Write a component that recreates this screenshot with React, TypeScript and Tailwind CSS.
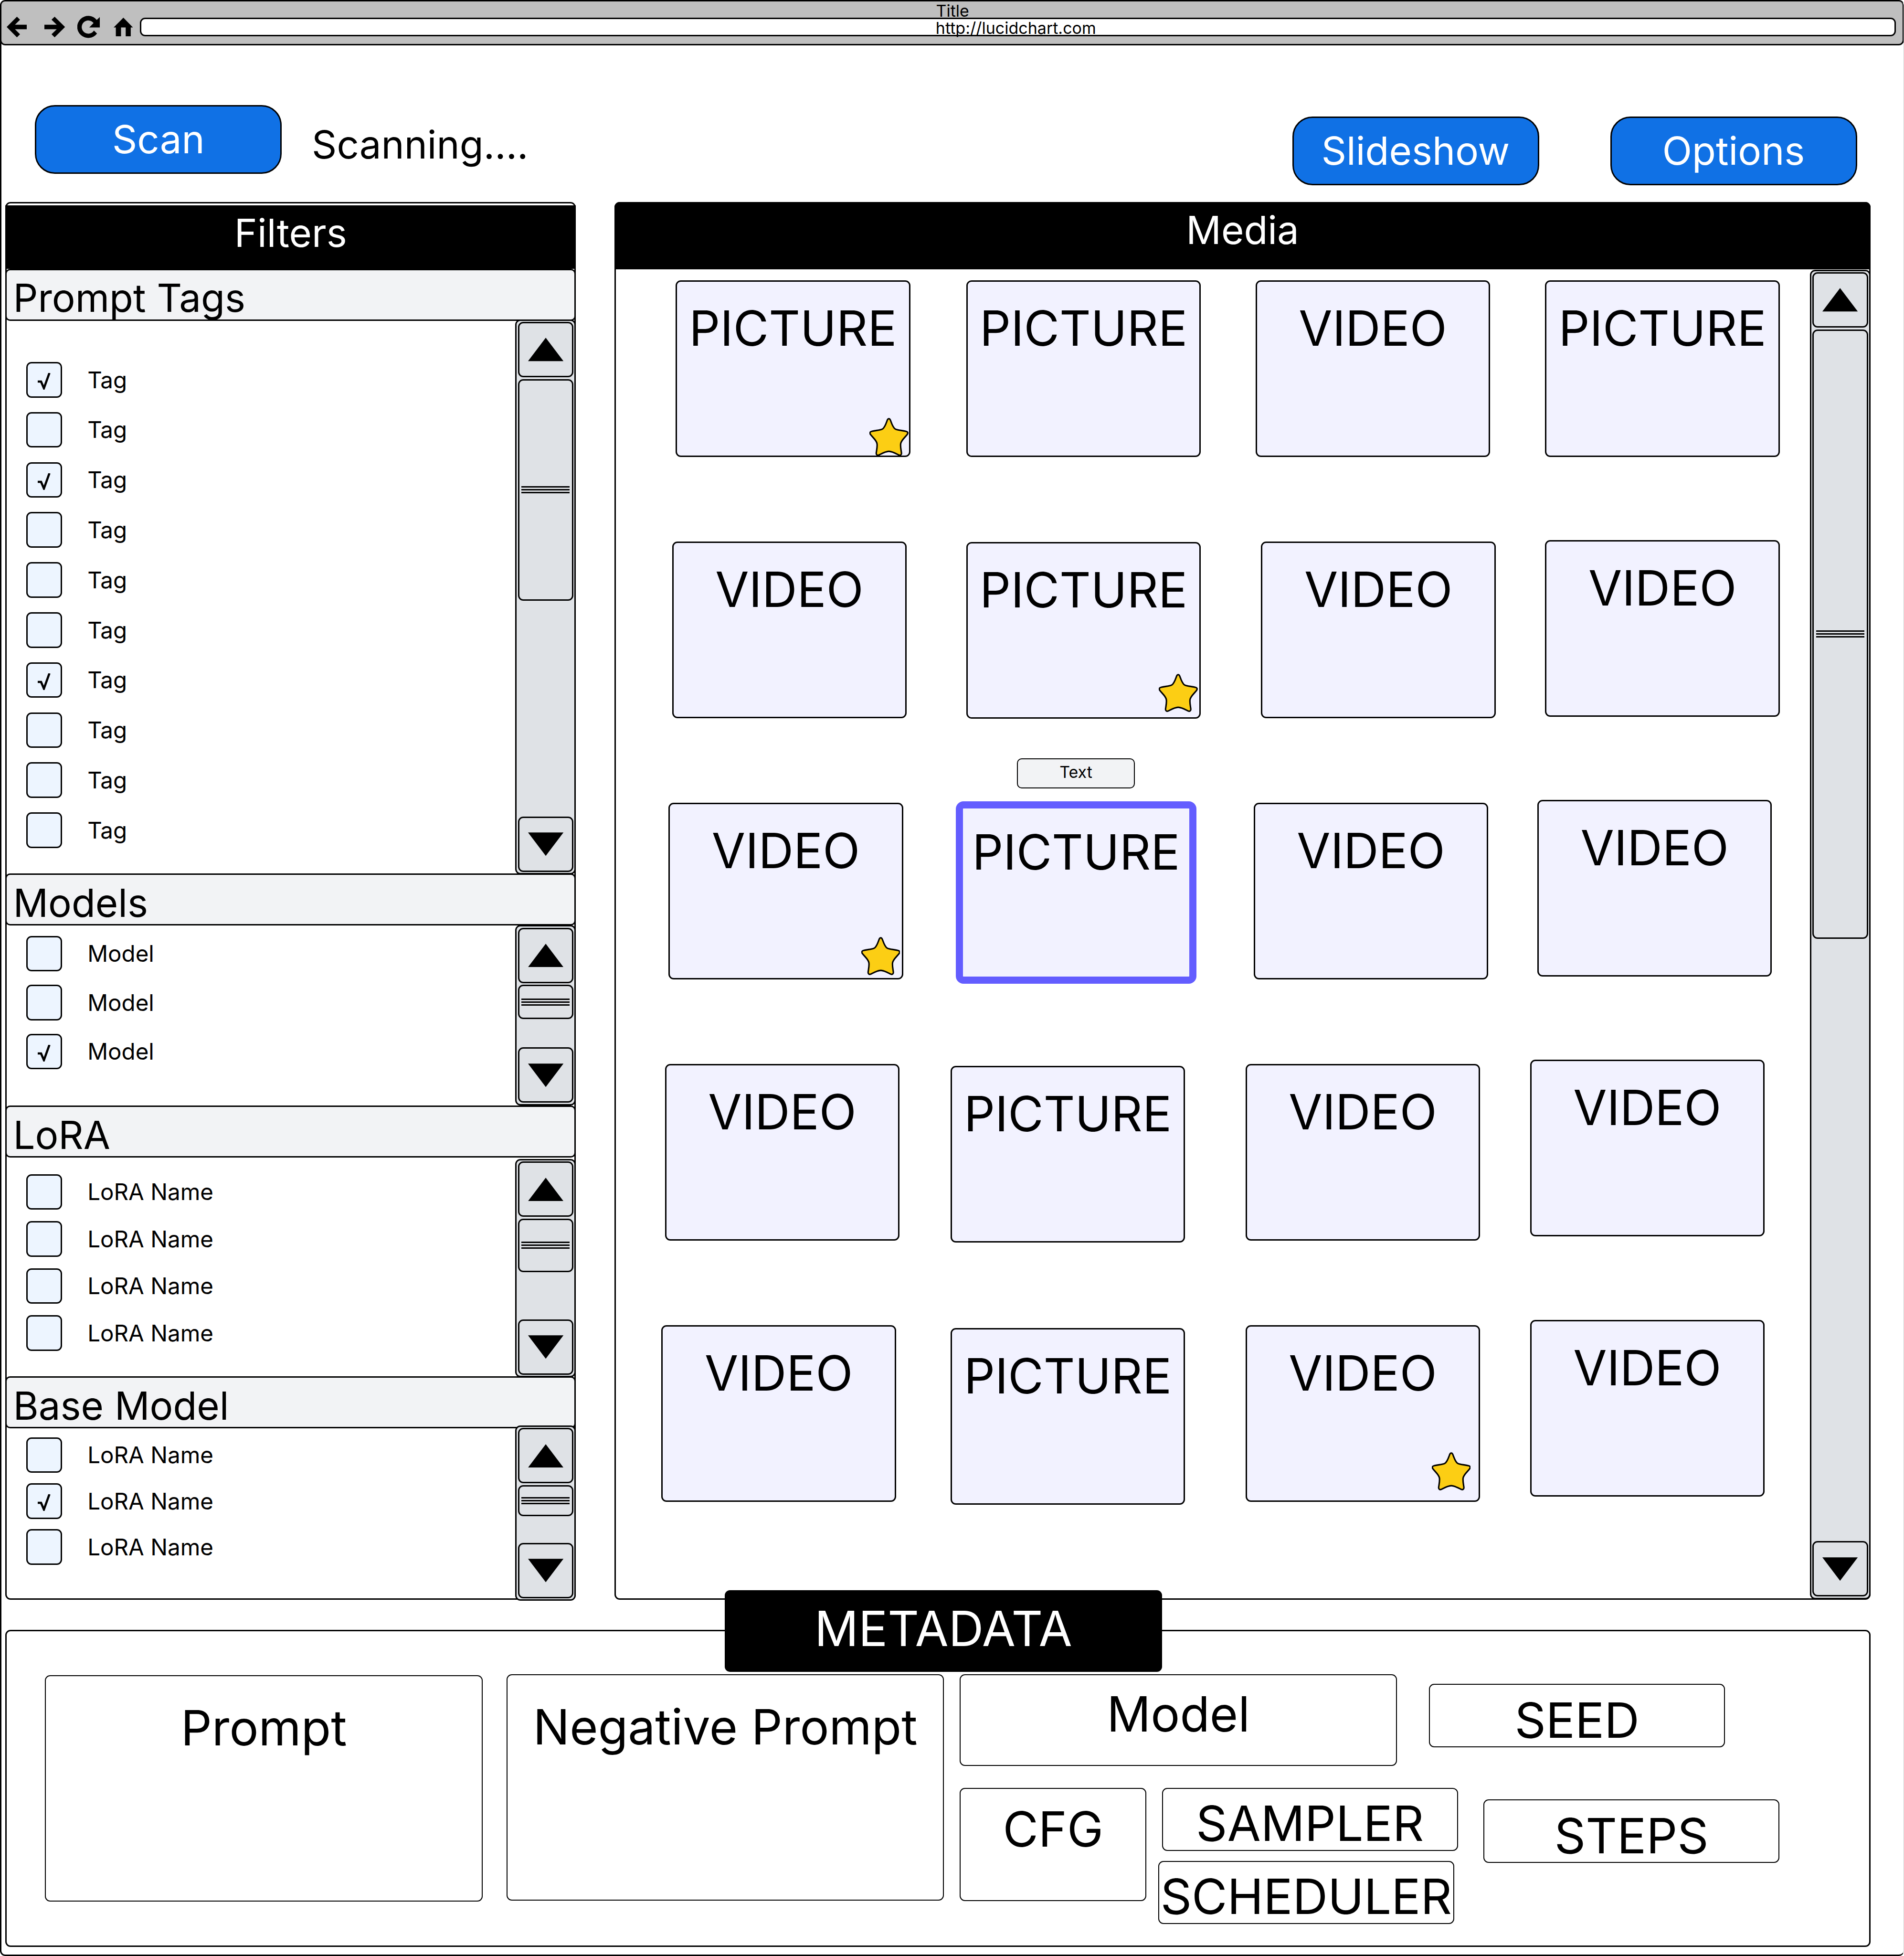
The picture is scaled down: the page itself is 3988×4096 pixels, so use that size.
import type { ReactNode } from "react";

function BackIcon() {
  return (
    <svg viewBox="50 69 158 159" className="h-[43.2px] w-[42.9px] shrink-0">
      <polygon points="50,148 129,69 153,92 114,131 208,131 208,166 114,166 153,204 129,228" />
    </svg>
  );
}

function ForwardIcon() {
  return (
    <svg viewBox="343 69 159 159" className="ml-[36.7px] h-[43.2px] w-[43.2px] shrink-0">
      <polygon points="502,148 422,69 398,92 438,131 343,131 343,166 438,166 398,204 422,228" />
    </svg>
  );
}

function ReloadIcon() {
  return (
    <svg viewBox="596 63 175 171" className="ml-[25.5px] h-[46.5px] w-[47.5px] shrink-0">
      <path d="M771 71V153H688L721 119A51 51 0 1 0 724 177L748 200A85 85 0 1 1 746 95Z" />
    </svg>
  );
}

function HomeIcon() {
  return (
    <svg viewBox="876 76 149 143" className="ml-[28.6px] h-[38.9px] w-[40.5px] shrink-0">
      <polygon points="951,76 1025,151 1008,151 1008,219 969,219 969,151 933,151 933,219 893,219 893,151 876,151" />
    </svg>
  );
}

function Star({ className }: { className: string }) {
  return (
    <svg viewBox="0 0 100 98" className={"absolute h-[80px] w-[81.5px] " + className}>
      <path
        d="M50 2C52.5 2 53.5 4 54.5 7C57 14 61 26 67 29C73 32 84 32 94 34.5C99 35.5 99.5 39 97.5 42C92 50 82 57 80.5 66C79 74 82 85 82.5 91C82.5 95.5 79 97 76 95.5C67 91 58 86 50 86C42 86 33 91 24 95.5C21 97 17.5 95.5 17.5 91C18 85 21 74 19.5 66C18 57 8 50 2.5 42C.5 39 1 35.5 6 34.5C16 32 27 32 33 29C39 26 43 14 45.5 7C46.5 4 47.5 2 50 2Z"
        fill="#fcce14"
        stroke="#000"
        strokeWidth="3.8"
      />
    </svg>
  );
}

function BlueButton({ className, children }: { className: string; children: ReactNode }) {
  return (
    <button
      className={
        "flex h-[143.5px] w-[517px] shrink-0 items-center justify-center rounded-[42px] border-[3px] border-black bg-[#1071e5] text-[81.5px] leading-none text-white " +
        className
      }
    >
      {children}
    </button>
  );
}

function ArrowButton({ down = false, className = "" }: { down?: boolean; className?: string }) {
  return (
    <div
      className={
        "flex h-[116px] shrink-0 items-center justify-center rounded-[11px] border-[3px] border-black bg-[#dfe2e6] " +
        className
      }
    >
      <svg viewBox="0 0 74 49" className="h-[49.4px] w-[74.2px]">
        <polygon points={down ? "0,0 74,0 37,49" : "0,49 74,49 37,0"} />
      </svg>
    </div>
  );
}

function ScrollBar({ className, thumb }: { className: string; thumb: string }) {
  return (
    <div
      className={
        "ml-auto flex w-[127px] shrink-0 flex-col rounded-[11px] border-[3px] border-black bg-[#dfe2e6] p-[2.4px] " +
        className
      }
    >
      <ArrowButton />
      <div
        className={
          "mt-[3.6px] flex shrink-0 flex-col items-center justify-center gap-[3px] rounded-[11px] border-[3px] border-black bg-[#dfe2e6] " +
          thumb
        }
      >
        <div className="h-[3px] w-[100.6px] shrink-0 bg-black" />
        <div className="h-[3px] w-[100.6px] shrink-0 bg-black" />
        <div className="h-[3px] w-[100.6px] shrink-0 bg-black" />
      </div>
      <ArrowButton down className="mt-auto" />
    </div>
  );
}

function CheckRow({ label, checked }: { label: string; checked: boolean }) {
  return (
    <label className="flex h-[74.5px] items-center text-[47.5px] leading-none">
      <span className="flex h-[74.5px] w-[74.5px] shrink-0 items-center justify-center rounded-[11px] border-[3px] border-black bg-[#edf5ff]">
        {checked && (
          <svg viewBox="0 0 27 35" className="mt-[7px] h-[35px] w-[27px]">
            <path d="M0 18H7L13 32L24.5 0" fill="none" stroke="#000" strokeWidth="4.6" />
          </svg>
        )}
      </span>
      <span className="ml-[53.6px] whitespace-nowrap">{label}</span>
    </label>
  );
}

type FilterSectionProps = {
  title: string;
  label: string;
  checks: boolean[];
  height: string;
  list: string;
  bar: string;
  thumb: string;
};

function FilterSection({ title, label, checks, height, list, bar, thumb }: FilterSectionProps) {
  return (
    <section className={"-mx-[3px] flex shrink-0 flex-col " + height}>
      <h2 className="h-[109px] shrink-0 rounded-[10px] border-[3px] border-black bg-[#f2f3f5] pt-[17.6px] pl-[13px] text-[81.5px] leading-none">
        {title}
      </h2>
      <div className="flex">
        <div className={"flex flex-col pl-[43.7px] " + list}>
          {checks.map((checked, i) => (
            <CheckRow key={i} label={label} checked={checked} />
          ))}
        </div>
        <ScrollBar className={bar} thumb={thumb} />
      </div>
    </section>
  );
}

type CardData = { kind: "PICTURE" | "VIDEO"; offset: string; star?: string; selected?: boolean };

const columns: { className: string; cards: CardData[] }[] = [
  {
    className: "w-[605.3px] gap-[177.1px] pt-[22.6px]",
    cards: [
      { kind: "PICTURE", offset: "ml-[29.7px]", star: "left-[403px] top-[285.5px]" },
      { kind: "VIDEO", offset: "ml-[22.2px]" },
      { kind: "VIDEO", offset: "ml-[14.8px]", star: "left-[400.4px] top-[278px]" },
      { kind: "VIDEO", offset: "ml-[7.3px]" },
      { kind: "VIDEO", offset: "ml-0" },
    ],
  },
  {
    className: "w-[618px] gap-[178.6px] pt-[22.6px]",
    cards: [
      { kind: "PICTURE", offset: "ml-[33.2px]" },
      { kind: "PICTURE", offset: "ml-[33.2px]", star: "left-[400.4px] top-[273px]" },
      { kind: "PICTURE", offset: "ml-[16.8px]", selected: true },
      { kind: "PICTURE", offset: "ml-0" },
      { kind: "PICTURE", offset: "ml-0" },
    ],
  },
  {
    className: "w-[595.8px] gap-[177.1px] pt-[22.6px]",
    cards: [
      { kind: "VIDEO", offset: "ml-[21px]" },
      { kind: "VIDEO", offset: "ml-[32.6px]" },
      { kind: "VIDEO", offset: "ml-[17px]" },
      { kind: "VIDEO", offset: "ml-0" },
      { kind: "VIDEO", offset: "ml-0", star: "left-[387px] top-[263px]" },
    ],
  },
  {
    className: "gap-[174.3px] pt-[22.6px]",
    cards: [
      { kind: "PICTURE", offset: "ml-[31.8px]" },
      { kind: "VIDEO", offset: "ml-[31.8px]" },
      { kind: "VIDEO", offset: "ml-[15.4px]" },
      { kind: "VIDEO", offset: "ml-0" },
      { kind: "VIDEO", offset: "ml-0" },
    ],
  },
];

function Card({ kind, offset, star, selected }: CardData) {
  if (selected) {
    return (
      <div className={"relative h-[370px] w-[491.5px] shrink-0 " + offset}>
        <div className="-mx-[6px] -my-[6px] h-[382px] w-[504.5px] rounded-[16px] border-[15px] border-[#635dff] bg-[#f2f2ff] pt-[41.2px] text-center text-[101.9px] leading-none">
          {kind}
        </div>
        <div className="absolute -top-[95.5px] left-[122.5px] h-[63px] w-[247px] rounded-[10px] border-2 border-black bg-[#f2f3f5] pt-[9.4px] text-center text-[34px] leading-none">
          Text
        </div>
      </div>
    );
  }
  return (
    <div
      className={
        "relative h-[370px] w-[491.5px] shrink-0 rounded-[11px] border-[3px] border-black bg-[#f2f2ff] pt-[47px] text-center text-[101.9px] leading-none " +
        offset
      }
    >
      {kind}
      {star && <Star className={star} />}
    </div>
  );
}

function Field({ className, children }: { className: string; children: ReactNode }) {
  return (
    <div
      className={
        "shrink-0 rounded-[11px] border-2 border-black text-center text-[101.9px] leading-none whitespace-nowrap " +
        className
      }
    >
      {children}
    </div>
  );
}

export default function App() {
  return (
    <div className="flex h-[4096px] w-[3988px] flex-col overflow-hidden rounded-[11px] border-[3px] border-r border-black border-r-[#cccccc] bg-white font-['Inter',sans-serif] text-black">
      <header className="-mt-[3px] -mr-px -ml-[3px] h-[94.5px] shrink-0 rounded-[11px] border-[3px] border-black bg-[#bfbfbf]">
        <div className="h-[33.7px] pt-[2.5px] pl-[1957.5px] text-[34px] leading-none">Title</div>
        <div className="flex h-[39.6px] items-center pr-[14px] pl-[10.6px]">
          <BackIcon />
          <ForwardIcon />
          <ReloadIcon />
          <HomeIcon />
          <div className="ml-[14.9px] h-[39.6px] flex-1 rounded-[11px] border-[3px] border-black bg-white pt-[2.8px] pl-[1663.5px] text-[34px] leading-none">
            http://lucidchart.com
          </div>
        </div>
      </header>

      <div className="flex h-[328.5px] shrink-0 items-start pr-[97.5px] pl-[70.3px]">
        <BlueButton className="mt-[125.5px]">Scan</BlueButton>
        <p className="mt-[167.6px] ml-[62.8px] text-[81.5px] leading-none">Scanning....</p>
        <BlueButton className="mt-[149.9px] ml-auto">Slideshow</BlueButton>
        <BlueButton className="mt-[149.9px] ml-[149px]">Options</BlueButton>
      </div>

      <main className="flex h-[2927px] shrink-0 pl-[8.4px]">
        <aside className="flex w-[1194.8px] shrink-0 flex-col rounded-[11px] border-[3px] border-black">
          <h1 className="-mx-[3px] mt-[4.3px] h-[132.5px] shrink-0 bg-black pt-[17px] text-center text-[81.5px] leading-none text-white">
            Filters
          </h1>
          <FilterSection
            title="Prompt Tags"
            label="Tag"
            checks={[true, false, true, false, false, false, true, false, false, false]}
            height="h-[1266.6px]"
            list="pt-[86.3px] gap-[30.3px]"
            bar="-mt-[3px] h-[1162.6px]"
            thumb="h-[463.9px]"
          />
          <FilterSection
            title="Models"
            label="Model"
            checks={[false, false, true]}
            height="h-[486px]"
            list="pt-[21.4px] gap-[27.9px]"
            bar="-mt-[1px] h-[377.4px]"
            thumb="h-[71.7px]"
          />
          <FilterSection
            title="LoRA"
            label="LoRA Name"
            checks={[false, false, false, false]}
            height="h-[566.6px]"
            list="pt-[34.2px] gap-[24.1px]"
            bar="mt-[2.6px] h-[457px]"
            thumb="h-[111.8px]"
          />
          <FilterSection
            title="Base Model"
            label="LoRA Name"
            checks={[false, true, false]}
            height="h-[465px]"
            list="pt-[19px] gap-[21.7px]"
            bar="-mt-[6px] h-[367px]"
            thumb="h-[65.4px]"
          />
        </aside>

        <section className="ml-[81px] flex w-[2630.8px] shrink-0 flex-col rounded-[11px] border-[3px] border-black">
          <h1 className="-mx-[3px] -mt-[3px] h-[141px] shrink-0 rounded-t-[11px] bg-black pt-[17.6px] text-center text-[81.5px] leading-none text-white">
            Media
          </h1>
          <div className="flex h-[2783px] pl-[95.3px]">
            {columns.map((column, i) => (
              <div key={i} className={"flex shrink-0 flex-col " + column.className}>
                {column.cards.map((card, j) => (
                  <Card key={j} {...card} />
                ))}
              </div>
            ))}
            <ScrollBar className="mt-[0.7px] -mr-[3px] h-[2784px]" thumb="h-[1276.5px]" />
          </div>
        </section>
      </main>

      <section className="relative mt-[62.6px] ml-[8.4px] flex h-[664.5px] w-[3906.6px] shrink-0 items-start rounded-[11px] border-[3px] border-black">
        <h1 className="absolute -top-[85.2px] left-[1503.6px] h-[170.4px] w-[916px] rounded-[11px] bg-black pt-[30px] text-center text-[101.9px] leading-none text-white">
          METADATA
        </h1>
        <Field className="mt-[92.3px] ml-[79.8px] h-[473.9px] w-[916.8px] pt-[58px]">Prompt</Field>
        <Field className="mt-[90.8px] ml-[49.6px] h-[473.8px] w-[916.9px] pt-[58px]">
          Negative Prompt
        </Field>
        <div className="mt-[90.8px] ml-[32.7px] flex flex-col">
          <div className="flex items-start">
            <Field className="h-[191.6px] w-[915.8px] pt-[30.4px]">Model</Field>
            <Field className="mt-[19.8px] ml-[67px] h-[132.8px] w-[620.4px] pt-[24px]">SEED</Field>
          </div>
          <div className="mt-[45.6px] flex items-start">
            <Field className="h-[237.7px] w-[391.2px] pt-[34.6px]">CFG</Field>
            <div className="ml-[32.2px] flex w-[620.4px] flex-col gap-[20.8px]">
              <Field className="h-[132.2px] pt-[22.8px]">SAMPLER</Field>
              <Field className="-ml-[7.8px] h-[132.3px] w-[620.4px] pt-[22px]">SCHEDULER</Field>
            </div>
            <Field className="mt-[24.3px] ml-[53.2px] h-[132.8px] w-[620.3px] pt-[24px]">STEPS</Field>
          </div>
        </div>
      </section>
    </div>
  );
}
